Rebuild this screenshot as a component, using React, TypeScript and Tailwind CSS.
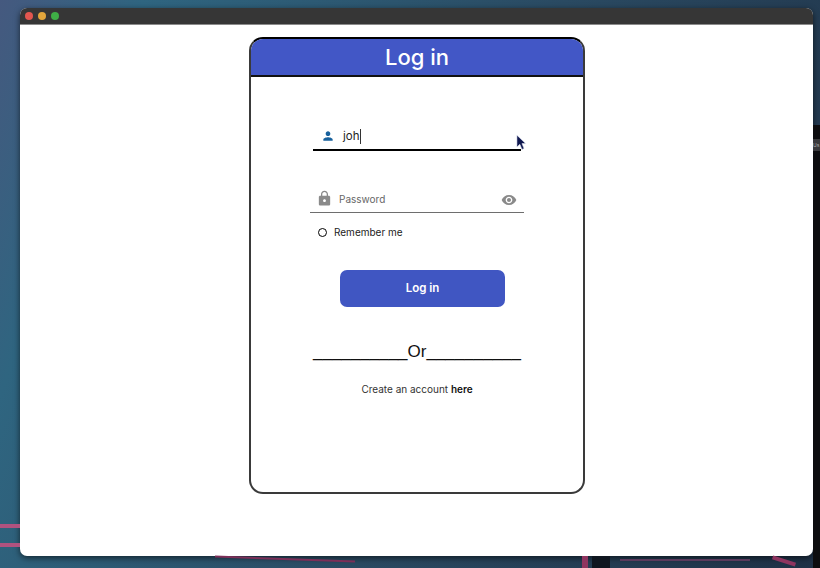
import React from 'react';

const PersonIcon = () => (
  <svg viewBox="0 0 24 24" className="w-[14px] h-[14px] text-[#17609c]" fill="currentColor">
    <path d="M12 12c2.2 0 4-1.8 4-4s-1.8-4-4-4-4 1.800-4 4 1.800 4 4 4zm0 2c-2.700 0-8 1.300-8 4v2h16v-2c0-2.700-5.300-4-8-4z" />
  </svg>
);

const LockIcon = () => (
  <svg viewBox="0 0 24 24" className="w-[17px] h-[17px] text-[#8a8a8a]" fill="currentColor">
    <path d="M18 8h-1V6c0-2.800-2.200-5-5-5S7 3.200 7 6v2H6c-1.100 0-2 .9-2 2v10c0 1.100.9 2 2 2h12c1.100 0 2-.9 2-2V10c0-1.100-.9-2-2-2zm-6 9c-1.100 0-2-.9-2-2s.9-2 2-2 2 .9 2 2-.9 2-2 2zm3.100-9H8.900V6c0-1.700 1.400-3.100 3.100-3.100s3.100 1.400 3.100 3.100v2z" />
  </svg>
);

const EyeIcon = () => (
  <svg viewBox="0 0 24 24" className="w-[16px] h-[16px] text-[#8a8a8a]" fill="currentColor">
    <path d="M12 4.500C7 4.500 2.700 7.600 1 12c1.700 4.400 6 7.500 11 7.500s9.300-3.100 11-7.500c-1.700-4.400-6-7.500-11-7.500zM12 17c-2.800 0-5-2.200-5-5s2.200-5 5-5 5 2.200 5 5-2.200 5-5 5zm0-8c-1.700 0-3 1.300-3 3s1.300 3 3 3 3-1.300 3-3-1.300-3-3-3z" />
  </svg>
);

const Cursor = () => (
  <svg viewBox="0 0 12 18" className="absolute left-[516px] top-[134px] w-[11px] h-[17px]">
    <path d="M1 1v13l3.200-3 2.300 5.500 2.300-1-2.300-5.300H10.500z" fill="#10184f" stroke="#e8ecf8" strokeWidth="0.6" />
  </svg>
);

export default function App() {
  return (
    <div className="relative w-[820px] h-[568px] overflow-hidden bg-[linear-gradient(110deg,#45597f_0%,#2f6580_14%,#2a4a62_55%,#1f3146_100%)] pl-[20px] pt-[8px] font-['Inter','Liberation_Sans',sans-serif]">
      {/* wallpaper bits */}
      <div className="absolute left-0 top-[524px] w-[20px] h-[4px] bg-[#b0527f]" />
      <div className="absolute left-0 top-[543px] w-[20px] h-[4px] bg-[#b0527f]" />
      <div className="absolute left-[215px] top-[558px] w-[140px] h-[2px] bg-[#7c2f58] rotate-[2deg]" />
      <div className="absolute left-[620px] top-[559px] w-[130px] h-[2px] bg-[#5a3a5c]" />
      <div className="absolute left-[582px] top-[556px] w-[6px] h-[12px] bg-[#8f3560]" />
      <div className="absolute left-[592px] top-[556px] w-[18px] h-[12px] bg-[#0f1620]" />
      <div className="absolute left-[772px] top-[559px] w-[24px] h-[4px] bg-[#8f3560] rotate-[18deg]" />
      <div className="absolute left-[813px] top-[125px] w-[7px] h-[443px] bg-[#0d0d0f] pt-[14px]">
        <div className="h-[12px] bg-[#3a3a3c] text-[5px] leading-[12px] text-[#aaa]">Us</div>
      </div>

      {/* window */}
      <div className="w-[793px] h-[548px] rounded-[7px] overflow-hidden bg-white flex flex-col shadow-[0_2px_6px_rgba(0,0,0,0.6)]">
        <div className="h-[16px] shrink-0 bg-[#363636] flex items-center gap-[5px] pl-[5px]">
          <span className="w-[8px] h-[8px] rounded-full bg-[#e2564f]" />
          <span className="w-[8px] h-[8px] rounded-full bg-[#e3a63c]" />
          <span className="w-[8px] h-[8px] rounded-full bg-[#3fae46]" />
        </div>
        <div className="h-px shrink-0 bg-[#8b8b8b]" />

        <div className="flex-1 flex justify-center pt-[12px]">
          <div className="w-[336px] h-[457px] ml-[1px] rounded-[14px] border-2 border-[#3a3a3a] border-t-black overflow-hidden flex flex-col">
            <div className="h-[38px] shrink-0 bg-[#4257c6] border-b-2 border-[#111] flex items-center justify-center text-white text-[22px] font-medium">
              Log in
            </div>

            <div className="flex flex-col pt-[49px]">
              {/* username */}
              <div className="ml-[62px] w-[208px] h-[25px] border-b-2 border-black flex items-start pt-[3px] pl-[8px]">
                <PersonIcon />
                <span className="ml-[8px] text-[11.5px] leading-[15px] text-[#222] border-r border-[#333] pr-[0.5px]">joh</span>
              </div>

              {/* password */}
              <div className="mt-[38px] ml-[59px] w-[214px] h-[24px] border-b border-[#6e6e6e] flex items-start pl-[6px] pr-[7px]">
                <span className="mt-[1px]"><LockIcon /></span>
                <span className="ml-[6px] mt-[2px] text-[10px] leading-[16px] text-[#666]">Password</span>
                <span className="ml-auto mt-[3px]"><EyeIcon /></span>
              </div>

              <div className="mt-[12px] ml-[67px] flex items-center gap-[8px]">
                <span className="w-[9px] h-[9px] rounded-full border-[1.5px] border-black" />
                <span className="text-[10px] leading-[14px] text-[#222] -ml-px">Remember me</span>
              </div>

              <button className="mt-[31px] ml-[89px] w-[165px] h-[37px] pt-px rounded-[7px] bg-[#4056c2] text-white text-[11.5px] font-semibold">
                Log in
              </button>

              <div className="mt-[33px] text-center text-[17px] leading-[24px] text-[#111] whitespace-nowrap font-['Liberation_Sans',sans-serif]">
                __________Or__________
              </div>

              <div className="mt-[18px] text-center text-[10px] leading-[14px] text-[#333]">
                Create an account <span className="font-semibold text-[#111]">here</span>
              </div>
            </div>
          </div>
        </div>
      </div>

      <Cursor />
    </div>
  );
}
